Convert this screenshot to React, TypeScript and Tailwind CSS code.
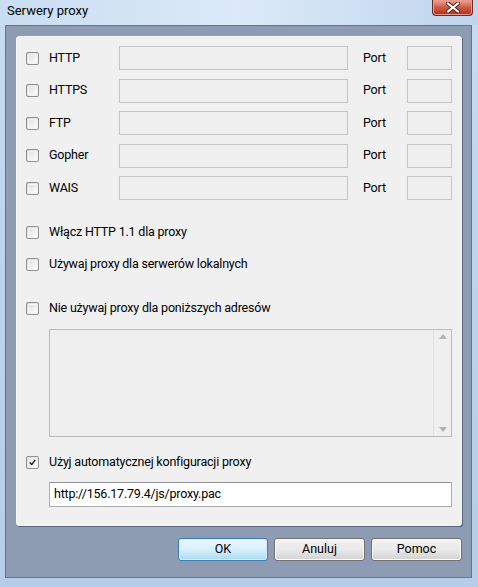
import React from "react";

const font = { fontFamily: 'Roboto, "Open Sans", "Liberation Sans", sans-serif' };

function Check({ checked = false }: { checked?: boolean }) {
  return (
    <div className="w-[13px] h-[13px] shrink-0 rounded-[2px] border border-[#8e8f8f] bg-gradient-to-br from-[#dcdcdc] to-[#fbfbfb] p-[1px] flex items-center justify-center">
      <div className="w-full h-full rounded-[1px] border border-[#f4f4f4] bg-gradient-to-br from-[#e3e3e3] to-[#fafafa] flex items-center justify-center">
        {checked && (
          <svg width="9" height="9" viewBox="0 0 9 9">
            <path d="M1 4.5 L3.5 7.2 L8 1.2" fill="none" stroke="#1b1b1b" strokeWidth="1.8" strokeLinejoin="round" />
          </svg>
        )}
      </div>
    </div>
  );
}

function ProtoRow({ name }: { name: string }) {
  return (
    <div className="flex items-center h-[24px]">
      <div className="w-[32px] pl-[9px] flex items-center">
        <Check />
      </div>
      <div className="w-[70px] text-[12.5px] tracking-[-0.2px] text-black leading-none">{name}</div>
      <div className="w-[229px] h-[24px] border border-[#c4c4c4] bg-[#efefef]" />
      <div className="w-[44px] pl-[15px] text-[12.5px] tracking-[-0.2px] text-black leading-none">Port</div>
      <div className="ml-[15px] w-[45px] h-[24px] border border-[#c4c4c4] bg-[#efefef]" />
    </div>
  );
}

function CheckRow({ label, checked = false, className = "" }: { label: string; checked?: boolean; className?: string }) {
  return (
    <div className={"flex items-center h-[16px] pl-[9px] gap-[10px] " + className}>
      <Check checked={checked} />
      <span className="text-[12.5px] tracking-[-0.2px] text-black leading-none">{label}</span>
    </div>
  );
}

function Btn({ label, def = false }: { label: string; def?: boolean }) {
  return (
    <div
      className={
        "h-[23px] rounded-[3px] border flex items-center justify-center text-[12.5px] text-black relative overflow-hidden " +
        (def
          ? "w-[90px] border-[#3c7fb1] bg-gradient-to-b from-[#eaf6fd] via-[#d9f0fc] to-[#a7d9f5] shadow-[inset_0_0_0_1px_#d6eefb]"
          : "w-[91px] border-[#707070] bg-gradient-to-b from-[#f2f2f2] via-[#e9e9e9] to-[#d2d2d2] shadow-[inset_0_0_0_1px_#fcfcfc]")
      }
    >
      {label}
    </div>
  );
}

export default function App() {
  return (
    <div
      style={font}
      className="w-[478px] h-[587px] bg-gradient-to-b from-[#c8dcf1] via-[#bcd3ec] to-[#b5cde8] flex flex-col overflow-hidden"
    >
      {/* Title bar */}
      <div className="h-[25px] flex items-start justify-between pl-[7px] pr-[5px] bg-gradient-to-r from-[#c9ddf2] via-[#dceaf8] to-[#bfd5ee]">
        <span className="mt-[4px] text-[13px] text-black leading-none">Serwery proxy</span>
        <div className="w-[41px] h-[16px] rounded-b-[4px] border border-t-0 border-[#6c2a22] bg-gradient-to-b from-[#e8a698] via-[#cf5a44] to-[#b02a16] shadow-[inset_0_0_0_1px_#e69b8c] flex items-center justify-center">
          <svg width="14" height="11" viewBox="0 0 14 11">
            <path d="M2 1.5 L12 9.5 M12 1.5 L2 9.5" stroke="#4a1a14" strokeWidth="4" strokeLinecap="square" />
            <path d="M2 1.5 L12 9.5 M12 1.5 L2 9.5" stroke="#ffffff" strokeWidth="2.2" strokeLinecap="square" />
          </svg>
        </div>
      </div>

      {/* Client area */}
      <div className="mx-[5px] w-[467px] h-[553px] border border-[#64738a] bg-[#8d9cb3] flex flex-col pl-[10px] pt-[10px] pr-[9px]">
        <div className="w-[446px] h-[490px] rounded-[3px] bg-[#f0f0f0] border border-[#f7f7f7] shadow-[1px_1px_0_#56657a] flex flex-col pt-[9px]">
          <div className="flex flex-col gap-[8.5px]">
            <ProtoRow name="HTTP" />
            <ProtoRow name="HTTPS" />
            <ProtoRow name="FTP" />
            <ProtoRow name="Gopher" />
            <ProtoRow name="WAIS" />
          </div>
          <CheckRow className="mt-[24px]" label="Włącz HTTP 1.1 dla proxy" />
          <CheckRow className="mt-[16px]" label="Używaj proxy dla serwerów lokalnych" />
          <CheckRow className="mt-[28px]" label="Nie używaj proxy dla poniższych adresów" />
          <div className="mt-[13px] ml-[32px] w-[403px] h-[108px] border border-[#bcbcbc] bg-[#efefef] flex justify-end">
            <div className="w-[18px] h-full border-l border-[#e2e2e2] flex flex-col items-center justify-between py-[4px]">
              <svg width="8" height="5" viewBox="0 0 8 5">
                <path d="M0 5 L4 0 L8 5 Z" fill="#b3b3b3" />
              </svg>
              <svg width="8" height="5" viewBox="0 0 8 5">
                <path d="M0 0 L4 5 L8 0 Z" fill="#b3b3b3" />
              </svg>
            </div>
          </div>
          <CheckRow className="mt-[17px]" checked label="Użyj automatycznej konfiguracji proxy" />
          <div className="mt-[12px] ml-[32px] w-[403px] h-[25px] border border-[#abadb3] border-t-[#8f9298] bg-white flex items-center pl-[4px] text-[12.5px] tracking-[-0.2px] text-black">
            http://156.17.79.4/js/proxy.pac
          </div>
        </div>
        <div className="mt-[12px] w-[446px] flex justify-end gap-[6px]">
          <Btn label="OK" def />
          <Btn label="Anuluj" />
          <Btn label="Pomoc" />
        </div>
      </div>
    </div>
  );
}
